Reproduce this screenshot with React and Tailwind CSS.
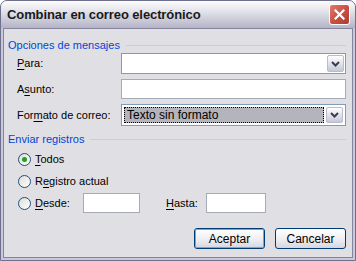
import React from 'react'

const font = { fontFamily: '"Liberation Sans", Arial, sans-serif' }

const Chevron = () => (
	<svg width="9" height="6" viewBox="0 0 9 6">
		<path d="M1 1 L4.5 4.5 L8 1" fill="none" stroke="#3c3c4c" strokeWidth="2" />
	</svg>
)

const DropButton = () => (
	<div className="w-[17px] h-full flex items-center justify-center rounded-[2px] border border-[#b8bcd0] bg-gradient-to-b from-[#ffffff] to-[#c5c8d8]">
		<Chevron />
	</div>
)

const GroupHeader = ({ title }) => (
	<div className="flex items-center gap-[6px] h-[16px]">
		<span className="text-[#0046d5] text-[11px]">{title}</span>
		<div className="flex-1 h-px bg-[#d0d0bf]" />
	</div>
)

const Radio = ({ checked }) => (
	<div className="w-[13px] h-[13px] rounded-full border border-[#1c5180] bg-gradient-to-br from-[#dcdcd7] to-[#ffffff] flex items-center justify-center">
		{checked && <div className="w-[5px] h-[5px] rounded-full bg-[#21a121]" />}
	</div>
)

const U = ({ children }) => <span className="underline underline-offset-[2px]">{children}</span>

const Button = ({ children, focused }) => (
	<div className="w-[71px] h-[21px] rounded-[3px] border border-[#003c74] bg-gradient-to-b from-[#ffffff] via-[#f0f0f4] to-[#d6d6e2] flex items-center justify-center text-[12px] text-black">
		<div className={`w-full h-full rounded-[2px] flex items-center justify-center ${focused ? 'border border-[#7ea3d8]' : ''}`}>
			{children}
		</div>
	</div>
)

export default function App() {
	return (
		<div className="w-[356px] h-[261px] bg-white" style={font}>
			<div className="w-full h-full rounded-t-[7px] border border-[#6e6e8e] bg-[#c8c8d8] flex flex-col overflow-hidden">
				<div className="h-[27px] shrink-0 flex items-center justify-between pl-[6px] pr-[5px] bg-gradient-to-b from-[#fdfdfd] via-[#dadae4] to-[#b4b4c6]">
					<span className="text-[13px] font-bold text-[#1a1a1a] tracking-[-0.1px]">Combinar en correo electrónico</span>
					<div className="w-[21px] h-[21px] rounded-[3px] border border-white bg-gradient-to-br from-[#e07a6c] via-[#cc5044] to-[#b03a30] flex items-center justify-center">
						<svg width="11" height="11" viewBox="0 0 11 11">
							<path d="M1.5 1.5 L9.5 9.5 M9.5 1.5 L1.5 9.5" stroke="white" strokeWidth="2.2" strokeLinecap="square" />
						</svg>
					</div>
				</div>
				<div className="flex-1 mx-[2px] mb-[2px] border border-[#8484a0] bg-[#e0dfe3] pl-[4px] pr-[6px] pt-[8px] text-[11px] text-black">
					<GroupHeader title="Opciones de mensajes" />
					<div className="pl-[9px] flex flex-col gap-[5px]">
						<div className="flex items-center h-[21px]">
							<span className="w-[104px]"><U>P</U>ara:</span>
							<div className="flex-1 h-full border border-[#7f9db9] bg-white flex justify-end p-px">
								<DropButton />
							</div>
						</div>
						<div className="flex items-center h-[20px]">
							<span className="w-[104px]">A<U>s</U>unto:</span>
							<div className="flex-1 h-full border border-[#a5acb5] bg-white" />
						</div>
						<div className="flex items-center h-[22px]">
							<span className="w-[104px]">For<U>m</U>ato de correo:</span>
							<div className="flex-1 h-full border border-[#7f9db9] bg-white flex p-[2px] gap-[2px]">
								<div className="flex-1 bg-[#b4b4bc] border border-dotted border-black flex items-center pl-[2px] text-[12px]">Texto sin formato</div>
								<DropButton />
							</div>
						</div>
					</div>
					<div className="mt-[5px]">
						<GroupHeader title="Enviar registros" />
					</div>
					<div className="pl-[10px] mt-[2px] flex flex-col">
						<div className="flex items-center h-[21px] gap-[4px]">
							<Radio checked />
							<span><U>T</U>odos</span>
						</div>
						<div className="flex items-center h-[22px] gap-[4px]">
							<Radio />
							<span>R<U>e</U>gistro actual</span>
						</div>
						<div className="flex items-center h-[22px] gap-[4px]">
							<Radio />
							<span className="w-[44px]"><U>D</U>esde:</span>
							<div className="w-[57px] h-[20px] border border-[#a5acb5] bg-white" />
							<span className="ml-[22px] w-[36px]"><U>H</U>asta:</span>
							<div className="w-[60px] h-[20px] border border-[#a5acb5] bg-white" />
						</div>
					</div>
					<div className="flex justify-end gap-[10px] mt-[14px]">
						<Button focused>Aceptar</Button>
						<Button>Cancelar</Button>
					</div>
				</div>
			</div>
		</div>
	)
}
